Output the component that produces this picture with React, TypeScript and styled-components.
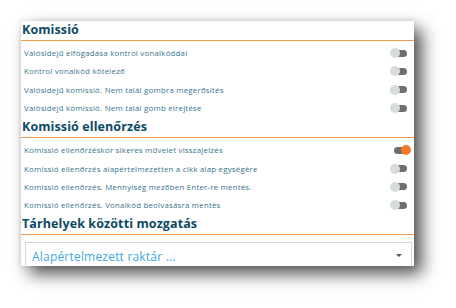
import React from 'react';
import styled, { createGlobalStyle } from 'styled-components';

const Global = createGlobalStyle`
  html, body {
    margin: 0;
    padding: 0;
    background: #ffffff;
  }
  body {
    font-family: "Open Sans", "DejaVu Sans", sans-serif;
  }
`;

const Page = styled.div`
  width: 456px;
  height: 308px;
  padding: 21px 0 0 21px;
  box-sizing: border-box;
`;

const Card = styled.div`
  width: 393px;
  height: 245px;
  background: #ffffff;
  overflow: hidden;
  box-shadow: 8px 8px 16px rgba(0, 0, 0, 0.68), 0 0 5px rgba(0, 0, 0, 0.12);
`;

const Heading = styled.h2`
  margin: 0;
  padding: 1px 0 3px 1px;
  height: 20px;
  box-sizing: border-box;
  line-height: 16px;
  font-size: 12.5px;
  font-weight: 700;
  color: #0c4a63;
  border-bottom: 1.5px solid #f29a4b;
  letter-spacing: 0.1px;
`;

const List = styled.div`
  display: flex;
  flex-direction: column;
  padding: 3px 3px 1px 3px;
`;

const Row = styled.div`
  display: flex;
  align-items: center;
  justify-content: space-between;
  height: 18.3px;
`;

const Label = styled.span`
  font-size: 7.8px;
  letter-spacing: 0.25px;
  color: #35728e;
  white-space: nowrap;
`;

const Switch = styled.span`
  position: relative;
  width: 21px;
  height: 10px;
  flex: none;
`;

const Track = styled.span`
  position: absolute;
  left: 4px;
  top: 1.5px;
  width: 13px;
  height: 7px;
  border-radius: 4px;
  background: #6f6f6f;
`;

const Thumb = styled.span<{ $on?: boolean }>`
  position: absolute;
  top: 0;
  left: ${p => (p.$on ? '11px' : '0')};
  width: 10px;
  height: 10px;
  border-radius: 50%;
  background: ${p => (p.$on ? '#f07a2a' : '#d6dbde')};
`;

const Select = styled.div`
  margin: 7px 2px 0 4px;
  height: 40px;
  border: 1.5px solid #c9d7df;
  border-bottom: none;
  display: flex;
  align-items: flex-start;
  justify-content: space-between;
  padding: 5px 9px 0 6px;
  box-sizing: border-box;
`;

const SelectText = styled.span`
  font-size: 12px;
  color: #42a7dc;
  letter-spacing: 0.2px;
`;

const Caret = styled.span`
  margin-top: 6px;
  width: 0;
  height: 0;
  border-left: 3px solid transparent;
  border-right: 3px solid transparent;
  border-top: 3.5px solid #555;
`;

const Toggle = ({ on }: { on?: boolean }) => (
  <Switch>
    <Track />
    <Thumb $on={on} />
  </Switch>
);

const sections = [
  {
    title: 'Komissió',
    rows: [
      ['Valósidejű elfogadása kontrol vonalkóddal', false],
      ['Kontrol vonalkód kötelező', false],
      ['Valósidejű komissió. Nem talál gombra megerősítés', false],
      ['Valósidejű komissió. Nem talál gomb elrejtése', false],
    ],
  },
  {
    title: 'Komissió ellenőrzés',
    rows: [
      ['Komissió ellenőrzéskor sikeres művelet visszajelzés', true],
      ['Komissió ellenőrzés alapértelmezetten a cikk alap egységére', false],
      ['Komissió ellenőrzés. Mennyiség mezőben Enter-re mentés.', false],
      ['Komissió ellenőrzés. Vonalkód beolvasásra mentés', false],
    ],
  },
] as { title: string; rows: [string, boolean][] }[];

export default function App() {
  return (
    <Page>
      <Global />
      <Card>
        {sections.map(s => (
          <React.Fragment key={s.title}>
            <Heading>{s.title}</Heading>
            <List>
              {s.rows.map(([label, on]) => (
                <Row key={label}>
                  <Label>{label}</Label>
                  <Toggle on={on} />
                </Row>
              ))}
            </List>
          </React.Fragment>
        ))}
        <Heading>Tárhelyek közötti mozgatás</Heading>
        <Select>
          <SelectText>Alapértelmezett raktár ...</SelectText>
          <Caret />
        </Select>
      </Card>
    </Page>
  );
}
